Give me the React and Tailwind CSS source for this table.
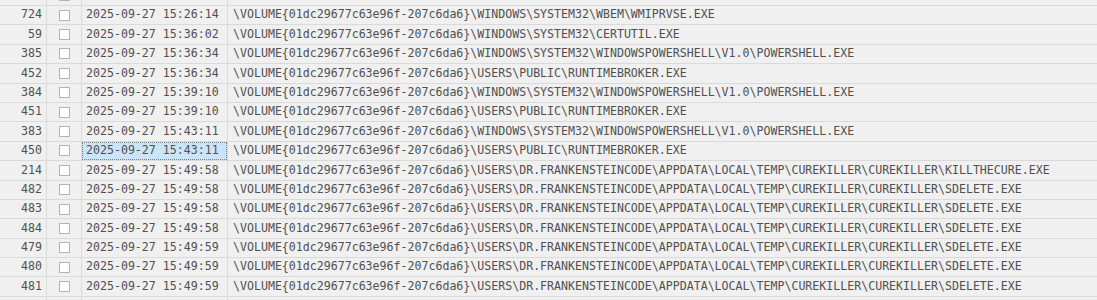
import React from 'react';

const VOL = '\\VOLUME{01dc29677c63e96f-207c6da6}';
const PS = '\\WINDOWS\\SYSTEM32\\WINDOWSPOWERSHELL\\V1.0\\POWERSHELL.EXE';
const RB = '\\USERS\\PUBLIC\\RUNTIMEBROKER.EXE';
const CK = '\\USERS\\DR.FRANKENSTEINCODE\\APPDATA\\LOCAL\\TEMP\\CUREKILLER\\CUREKILLER\\';

// first and last entries are rows scrolled half out of the view, only their edges show
const rows = [
  { id: '', time: '', path: '' },
  { id: 724, time: '2025-09-27 15:26:14', path: VOL + '\\WINDOWS\\SYSTEM32\\WBEM\\WMIPRVSE.EXE' },
  { id: 59, time: '2025-09-27 15:36:02', path: VOL + '\\WINDOWS\\SYSTEM32\\CERTUTIL.EXE' },
  { id: 385, time: '2025-09-27 15:36:34', path: VOL + PS },
  { id: 452, time: '2025-09-27 15:36:34', path: VOL + RB },
  { id: 384, time: '2025-09-27 15:39:10', path: VOL + PS },
  { id: 451, time: '2025-09-27 15:39:10', path: VOL + RB },
  { id: 383, time: '2025-09-27 15:43:11', path: VOL + PS },
  { id: 450, time: '2025-09-27 15:43:11', path: VOL + RB, selected: true },
  { id: 214, time: '2025-09-27 15:49:58', path: VOL + CK + 'KILLTHECURE.EXE' },
  { id: 482, time: '2025-09-27 15:49:58', path: VOL + CK + 'SDELETE.EXE' },
  { id: 483, time: '2025-09-27 15:49:58', path: VOL + CK + 'SDELETE.EXE' },
  { id: 484, time: '2025-09-27 15:49:58', path: VOL + CK + 'SDELETE.EXE' },
  { id: 479, time: '2025-09-27 15:49:59', path: VOL + CK + 'SDELETE.EXE' },
  { id: 480, time: '2025-09-27 15:49:59', path: VOL + CK + 'SDELETE.EXE' },
  { id: 481, time: '2025-09-27 15:49:59', path: VOL + CK + 'SDELETE.EXE' },
  { id: '', time: '', path: '', blank: true },
];

const Row = ({ row }) => (
  <div className="grid grid-cols-[47px_35px_146px_1fr] h-[19.4px] border-b border-[#dadada]">
    <div className="border-r border-[#dadada] flex items-center justify-end pr-[4px]">{row.id}</div>
    <div className="border-r border-[#dadada] flex items-center justify-center">
      {!row.blank && <div className="w-[11px] h-[11px] bg-white border border-[#b4b4b4]"></div>}
    </div>
    <div className="border-r border-[#dadada] flex items-stretch">
      <div
        className={`flex-1 flex items-center pl-[3px] ${
          row.selected ? 'bg-[#cce4f7] border border-dotted border-[#6b8299]' : 'border border-transparent'
        }`}
      >
        {row.time}
      </div>
    </div>
    <div className="flex items-center pl-[5px] whitespace-nowrap">{row.path}</div>
  </div>
);

export default function App() {
  return (
    <div
      className="h-[300px] w-full overflow-hidden bg-[#f0f0f0] text-[#505050] text-[11.6px] leading-none"
      style={{ fontFamily: '"DejaVu Sans Mono", "Liberation Mono", monospace' }}
    >
      <div className="-mt-[13.4px]">
        {rows.map((row, i) => (
          <Row key={i} row={row} />
        ))}
      </div>
    </div>
  );
}
